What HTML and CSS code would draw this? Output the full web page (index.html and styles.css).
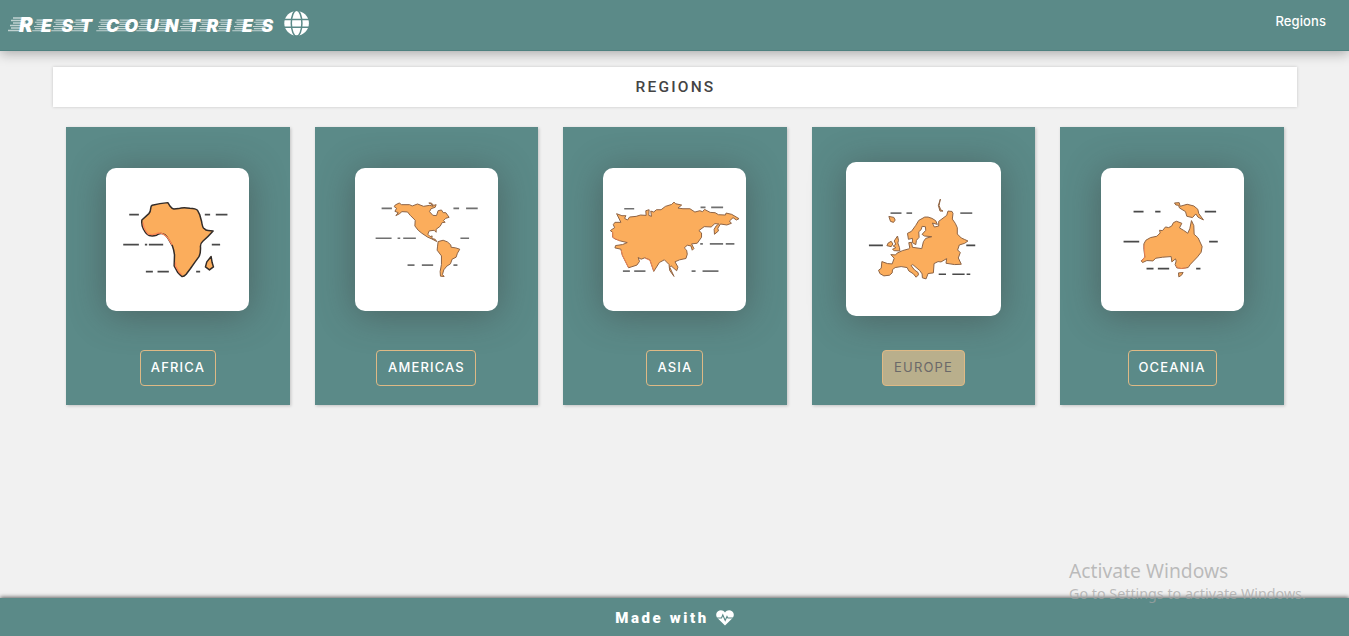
FILE: index.html
```html
<!DOCTYPE html>
<html lang="en">
<head>
<meta charset="utf-8">
<title>Rest countries</title>
<link rel="stylesheet" href="styles.css">
</head>
<body>
<header class="navbar">
  <svg class="brand" width="312" height="50" viewBox="0 0 312 50">
    <defs>
      <g id="speed" stroke="#fff" stroke-width="1.3">
        <path d="M3-14h14M1-11.5h15M3-9h13M0-6.5h15M1-4h12M-2-1.5h15" opacity=".62"/>
      </g>
    </defs>
    <use href="#speed" x="10" y="32"/>
    <g>
      <use href="#speed" transform="translate(34 32) scale(.85)"/>
      <use href="#speed" transform="translate(53 32) scale(.85)"/>
      <use href="#speed" transform="translate(73 32) scale(.85)"/>
      <use href="#speed" transform="translate(98 32) scale(.85)"/>
      <use href="#speed" transform="translate(117 32) scale(.85)"/>
      <use href="#speed" transform="translate(138 32) scale(.85)"/>
      <use href="#speed" transform="translate(158 32) scale(.85)"/>
      <use href="#speed" transform="translate(180 32) scale(.85)"/>
      <use href="#speed" transform="translate(199 32) scale(.85)"/>
      <use href="#speed" transform="translate(218 32) scale(.85)"/>
      <use href="#speed" transform="translate(234 32) scale(.85)"/>
      <use href="#speed" transform="translate(253 32) scale(.85)"/>
    </g>
    <text class="brand-text" y="32.3" x="19 41 61.5 80 98 106 124.5 146 165 188 206.5 226 242 261.5"><tspan class="brand-initial">R</tspan>EST COUNTRIES</text>
    <circle cx="296.6" cy="23.3" r="12.3" fill="#fff"/>
    <g fill="none" stroke="#5b8a88" stroke-width="1.5">
      <path d="M284 19.4h26M284 27.2h26"/>
      <ellipse cx="296.6" cy="23.3" rx="5.3" ry="13"/>
    </g>
  </svg>
  <a class="nav-link">Regions</a>
</header>
<main class="content">
  <h1 class="title">REGIONS</h1>
  <section class="regions">
    <article class="card">
      <svg class="tile" viewBox="19 23 428 428">
        <path class="dash" d="M88 163h29M315 163h16M348 163h35M70 253h47M135 253h7M147 253h43M336 253h25M138 334h21M173 334h34M289 334h12"/>
        <path class="land bold" d="M157 135Q180 129 204 127L211 138Q216 145 222 146L236 145Q250 140 270 144 288 145 293 150L300 164 305 182Q308 203 313 205 318 211 325 211L340 212Q325 229 309 243 301 250 302 260 303 280 297 290L286 305 272 325 259 342Q252 350 246 349 240 344 234 337L223 317 224 284Q222 268 218 258L206 237Q196 220 185 220 177 219 170 225 158 229 148 226 139 223 131 207 124 195 126 179L147 160Q152 155 153 142 153 137 157 135Z"/>
        <path class="shade" d="M130 187Q130 205 145 221 159 226 176 218 190 218 204 233L217 254M227 306 227 317 238 336 247 344"/>
        <path class="land bold" d="M334 289 337 307 341 320 329 329 317 320 321 305Z"/>
      </svg>
      <a class="button africa">AFRICA</a>
    </article>
    <article class="card">
      <svg class="tile" viewBox="19 23 430 428">
        <path class="dash soft" d="M99 144h31M315 144h17M353 144h35M81 234h48M147 234h8M164 234h38M336 234h26M177 315h21M220 315h34M315 315h12"/>
        <path class="land" d="M140 134 152 128 159 133 183 133 191 137 207 131 225 138 244 135 254 138 248 131 241 128 248 128 256 135 263 133 260 141 248 145 243 154 253 165 264 166 269 151 279 149 284 157 292 157 302 171 292 174 285 181 290 186 281 187 275 198 263 207 263 216 257 210 242 212 238 222 245 229 251 227 250 235 260 237 265 244 250 236 238 231 220 219 209 210 199 197 200 180 185 165 177 155 160 154 153 160 142 166 149 157 139 153 144 144 137 139Z"/>
        <path class="land" d="M269 244 284 240 297 245 307 254 308 261 322 263 334 267 327 279 323 291 311 297 306 311 295 318 286 329 282 343 287 349 276 348 275 334 279 313 279 287 266 270 267 260Z"/>
      </svg>
      <a class="button americas">AMERICAS</a>
    </article>
    <article class="card">
      <svg class="tile" viewBox="21 23 431 428">
        <path class="dash soft" d="M85 145h30M315 141h15M347 141h36M314 251h8M343 251h40M391 251h26M81 333h21M115 333h34M288 333h12M321 333h48"/>
        <path class="land" d="M75 186 62 160 78 166 90 166 86 174 95 179 101 170 121 168 134 164 151 165 150 151 160 148 159 165 167 168 165 152 174 155 182 148 196 148 209 138 228 132 235 125 240 130 258 134 247 143 262 145 283 145 298 155 313 151 321 154 327 147 344 156 359 157 369 163 390 164 392 158 409 162 431 175 423 179 413 172 402 182 408 189 394 194 375 191 367 204 369 212 357 222 356 207 362 197 370 191 358 190 347 200 326 199 310 211 318 218 318 231 305 249 288 251 295 265 290 270 286 257 275 255 266 263 273 270 275 282 271 295 252 299 238 305 247 321 243 332 226 317 222 321 235 349 222 331 220 313 206 299 191 307 174 334 162 299 147 293 136 297 127 292 131 304 123 315 98 323 79 285 75 267 57 263 59 256 80 253 94 247 73 242 57 236 50 231 50 216 43 211 56 202 52 193 57 186Z"/>
        <path class="shade thin" d="M50 215 51 231 72 242M76 271 80 286 98 322M148 294 163 301 174 332"/>
      </svg>
      <a class="button asia">ASIA</a>
    </article>
    <article class="card">
      <svg class="tile active" viewBox="19 21 465 462">
        <path class="dash soft" d="M153 174h33M201 174h17M363 174h36"/>
        <path class="dash" d="M88 271h42M381 271h27M298 358h22M339 358h37M382 358h11"/>
        <path class="land" d="M127 320 144 326 158 327 164 310 154 299 168 300 172 295 189 287 207 282 211 279 208 263 216 262 219 277 247 281 252 260 259 250 277 245 255 243 248 238 259 226 258 215 248 214 245 224 238 230 239 247 231 256 229 269 219 263 219 250 207 253 204 235 216 229 229 211 238 196 256 186 266 186 278 190 289 197 294 208 279 204 285 216 298 213 298 199 322 181 326 168 338 169 341 175 339 192 348 205 354 218 354 237 366 249 375 253 386 258 376 265 360 270 355 285 363 293 357 309 366 328 346 329 320 325 322 311 305 321 296 320 284 326 282 354 266 356 260 372 249 369 248 357 241 347 220 329 215 332 225 345 236 353 237 360 230 367 222 357 208 348 203 338 185 335 167 338 159 344 158 354 150 361 133 363 121 356 117 346 125 340Z"/>
        <path class="land" d="M148 184 163 187 167 195 162 202 153 199ZM303 132 299 151 304 164 311 168 302 168 297 151ZM155 259 160 267 155 275 142 272 146 264ZM174 243 177 256 175 264 180 278 181 288 164 287 159 283 169 278 161 273 169 268 164 258Z"/>
      </svg>
      <a class="button europe">EUROPE</a>
    </article>
    <article class="card">
      <svg class="tile" viewBox="27 23 428 428">
        <path class="dash" d="M124 154h30M189 154h16M338 154h34M94 244h47M351 244h26M163 325h21M197 325h34M312 325h13"/>
        <path class="land" d="M161 240 175 232 194 228 204 218 202 210 211 211 220 200 229 202 238 198 244 187 253 183 269 189 262 203 274 210 287 219 293 205 298 181 305 196 306 222 318 233 330 259 327 276 316 290 295 312 288 322 269 325 254 323 249 313 252 302 250 296 239 305 237 289 211 291 191 294 182 302 164 301 151 307 147 302 158 291 155 267 155 251Z"/>
        <path class="shade thin" d="M156 255 158 289 149 303M252 318 264 325 282 323"/>
        <path class="land" d="M247 128 261 127 264 138 285 132 305 137 317 147 320 160 334 179 318 171 311 161 301 172 284 168 280 154 262 143 259 135 251 134ZM259 338 273 337 268 345 260 350Z"/>
      </svg>
      <a class="button oceania">OCEANIA</a>
    </article>
  </section>
</main>
<footer class="footer">
  <span>Made with</span>
  <svg width="18" height="16" viewBox="0 0 18 16">
    <path fill="#fff" d="M9 15.5 1.6 8.2C-.5 6-.1 2.5 2 1.2 4.5-.3 7.4.2 9 2.6 10.6.2 13.5-.3 16 1.2c2.1 1.3 2.5 4.8.4 7Z"/>
    <path fill="none" stroke="#5b8a88" stroke-width="1.1" d="M1 8h4.5l1.3-3 2.4 5.5L11 6.5l.9 1.5H17"/>
  </svg>
</footer>
<aside class="watermark">
  <div class="watermark-title">Activate Windows</div>
  <div class="watermark-note">Go to Settings to activate Windows.</div>
</aside>
</body>
</html>
```
FILE: styles.css
```css
* { box-sizing: border-box; }

body {
  margin: 0;
  height: 636px;
  display: flex;
  flex-direction: column;
  background: #f1f1f1;
  font-family: Inter, "Open Sans", sans-serif;
  overflow: hidden;
}

.navbar {
  height: 51px;
  flex: none;
  display: flex;
  justify-content: space-between;
  padding-right: 23px;
  background: #5b8a88;
  border-bottom: 1px solid #4f8180;
  box-shadow: 0 2px 12px rgba(0, 0, 0, .32);
}

.brand { display: block; }
.brand-text {
  font: italic 900 17.5px Inter, sans-serif;
  fill: #fff;
}
.brand-initial { font-size: 20.5px; }

.nav-link {
  margin-top: 13px;
  font-size: 13px;
  line-height: 16px;
  font-weight: 500;
  letter-spacing: .1px;
  color: #fff;
}

.content { flex: 1; padding: 16px 52px 0 53px; }

.title {
  height: 40px;
  margin: 0 0 20px;
  padding-left: 1px;
  background: #fff;
  box-shadow: 0 0 3px rgba(0, 0, 0, .18);
  color: #444;
  font: 500 15.5px/40px Roboto, sans-serif;
  letter-spacing: 2.2px;
  text-align: center;
}

.regions {
  display: grid;
  grid-template-columns: repeat(5, 1fr);
  gap: 24.6px;
  margin: 0 13px;
}

.card {
  height: 278px;
  display: flex;
  flex-direction: column;
  align-items: center;
  justify-content: space-between;
  padding: 41px 0 19px;
  background: #5b8a88;
  box-shadow: 1px 1px 3px rgba(0, 0, 0, .2);
}

.tile {
  width: 143px;
  height: 142.5px;
  background: #fff;
  border-radius: 10px;
  box-shadow: 0 4px 36px rgba(60, 60, 60, .48);
}
.tile.active {
  width: 154.5px;
  height: 154px;
  margin-top: -6px;
}

.dash { fill: none; stroke: #494949; stroke-width: 5; }
.dash.soft { stroke: #707070; }
.land { fill: #fbad5c; stroke: #8d6345; stroke-width: 3; stroke-linejoin: round; }
.land.bold { stroke: #332c28; stroke-width: 4.5; }
.shade { fill: none; stroke: #fb8755; stroke-width: 4; stroke-linejoin: round; }
.shade.thin { stroke-width: 2.5; }

.button {
  height: 36px;
  border: 1px solid #deb985;
  border-radius: 4px;
  color: #fff;
  font-size: 13px;
  font-weight: 500;
  line-height: 32px;
  letter-spacing: 1.15px;
  text-align: center;
}
.africa { width: 76px; }
.americas { width: 100px; }
.asia { width: 57px; }
.europe { width: 83px; background: #b9af8c; color: #6b6969; font-weight: 400; }
.oceania { width: 89px; }

.footer {
  height: 38px;
  flex: none;
  display: flex;
  align-items: center;
  justify-content: center;
  gap: 7px;
  padding-top: 2px;
  background: #5b8a88;
  box-shadow: 0 -1px 4px rgba(0, 0, 0, .6);
  color: #fff;
  font: 900 15px Roboto, sans-serif;
  letter-spacing: 2.6px;
}

.watermark {
  position: absolute;
  left: 1069px;
  top: 558px;
  color: rgba(165, 165, 165, .72);
  font-family: "Noto Sans", sans-serif;
  white-space: nowrap;
}
.watermark-title { font-size: 19.3px; line-height: 26px; }
.watermark-note { font-size: 14.3px; line-height: 20px; }
```
